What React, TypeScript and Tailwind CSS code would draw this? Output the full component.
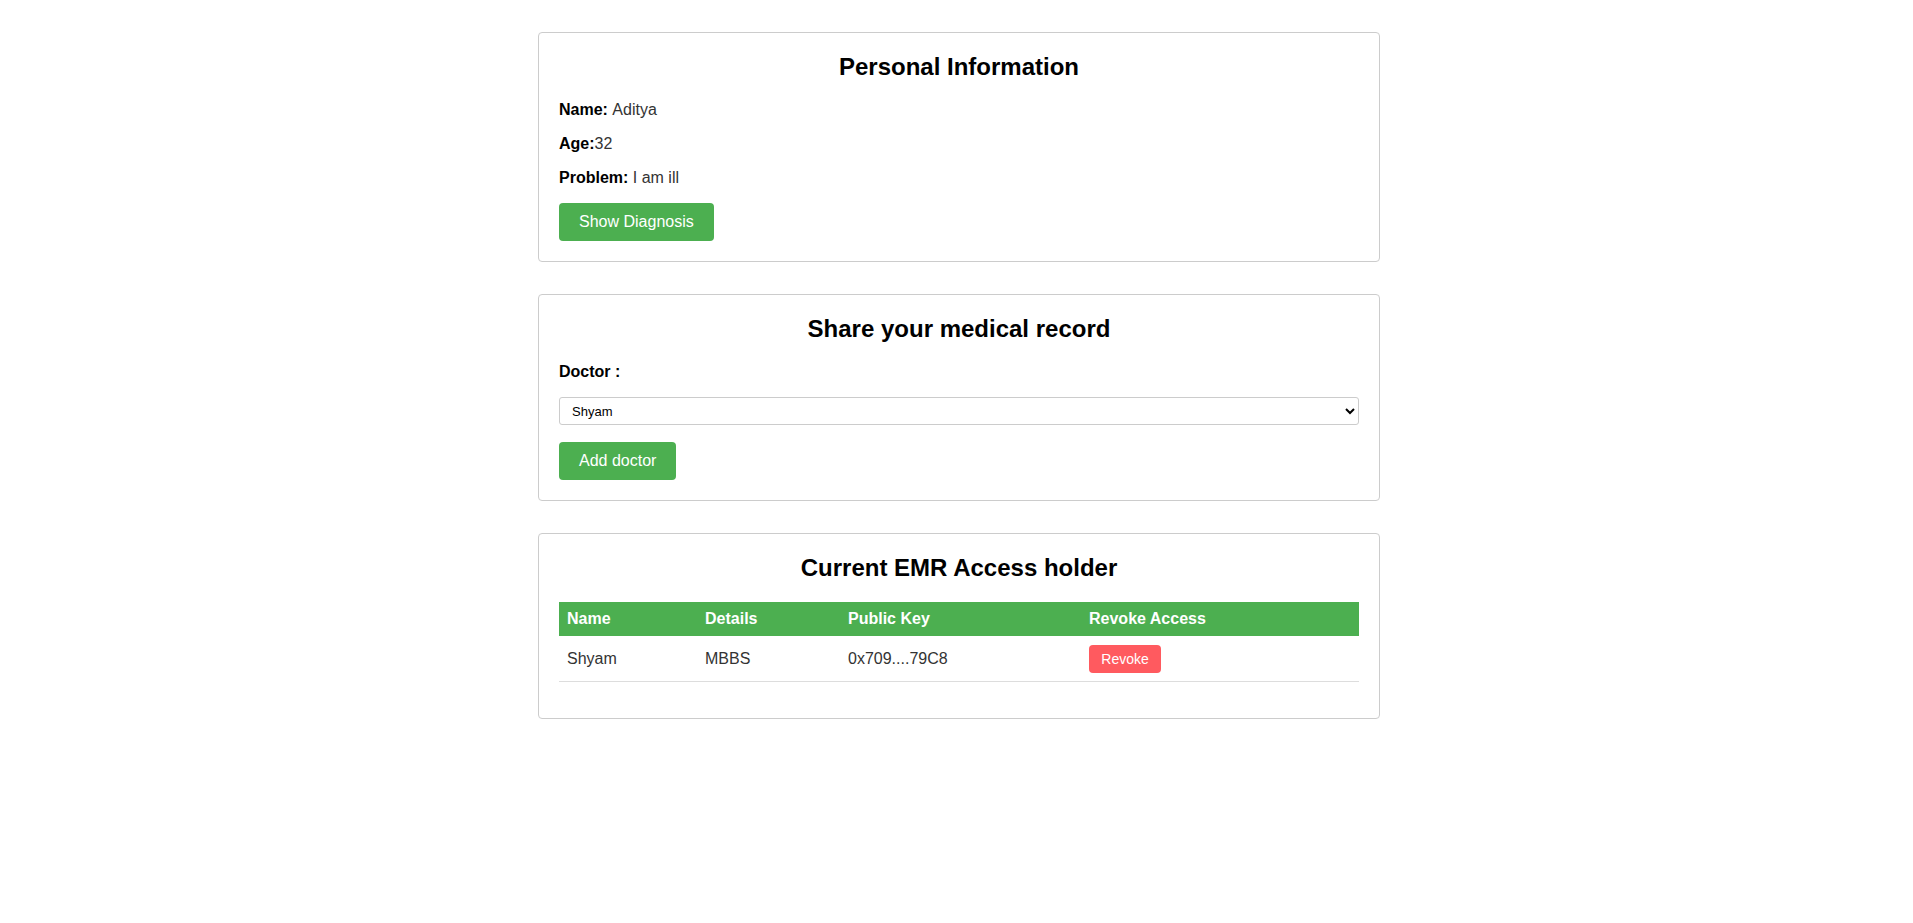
import type { ReactNode } from "react";

const FONT = "font-['Liberation_Sans',Arial,sans-serif]";

function Card({ title, children }: { title: string; children: ReactNode }) {
  return (
    <section className="mx-auto mb-8 w-[842px] rounded border border-[#ccc] bg-white p-5">
      <h2 className="mb-5 text-center text-2xl leading-[28px] font-bold text-black">
        {title}
      </h2>
      {children}
    </section>
  );
}

function GreenButton({ children }: { children: ReactNode }) {
  return (
    <button className="rounded bg-[#4caf50] px-5 py-[10px] text-base leading-[18px] text-white">
      {children}
    </button>
  );
}

function Field({ label, value }: { label: string; value: string }) {
  return (
    <p className="mb-4 text-base leading-[18px] text-[#333]">
      <b className="text-black">{label}</b>
      {value}
    </p>
  );
}

const holders = [
  { name: "Shyam", details: "MBBS", key: "0x709....79C8" },
];

export default function App() {
  return (
    <div className={`${FONT} min-h-screen bg-white pt-8 pl-[5px]`}>
      <Card title="Personal Information">
        <Field label="Name: " value="Aditya" />
        <Field label="Age:" value="32" />
        <Field label="Problem: " value="I am ill" />
        <GreenButton>Show Diagnosis</GreenButton>
      </Card>

      <Card title="Share your medical record">
        <p className="mb-4 text-base leading-[18px] font-bold text-black">
          Doctor :
        </p>
        <select className="mb-[17px] block h-7 w-full rounded-[3px] border border-[#ccc] bg-white pl-2 text-[13px] text-black">
          <option>Shyam</option>
        </select>
        <GreenButton>Add doctor</GreenButton>
      </Card>

      <Card title="Current EMR Access holder">
        <table className="mb-4 w-full border-collapse text-left text-base leading-[18px]">
          <thead>
            <tr className="bg-[#4caf50] text-white">
              <th className="h-[34px] w-[138px] px-2 font-bold">Name</th>
              <th className="h-[34px] w-[143px] px-2 font-bold">Details</th>
              <th className="h-[34px] w-[241px] px-2 font-bold">Public Key</th>
              <th className="h-[34px] px-2 font-bold">Revoke Access</th>
            </tr>
          </thead>
          <tbody>
            {holders.map((h) => (
              <tr key={h.key} className="border-b border-[#ddd] text-[#333]">
                <td className="px-2 pt-[9px] pb-2">{h.name}</td>
                <td className="px-2 pt-[9px] pb-2">{h.details}</td>
                <td className="px-2 pt-[9px] pb-2">{h.key}</td>
                <td className="px-2 pt-[9px] pb-2">
                  <button className="h-7 w-[72px] rounded bg-[#ff5a5f] text-sm text-white">
                    Revoke
                  </button>
                </td>
              </tr>
            ))}
          </tbody>
        </table>
      </Card>
    </div>
  );
}
